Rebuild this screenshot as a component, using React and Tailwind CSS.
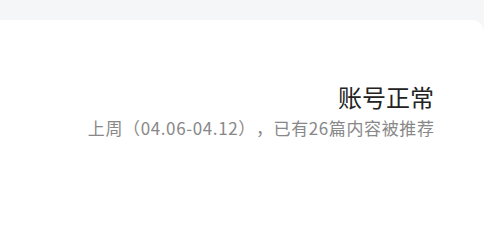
export default function App() {
  return (
    <div
      className="w-[484px] h-[235px] bg-[#f5f6f7] pt-5 overflow-hidden"
      style={{ fontFamily: '"Noto Sans CJK SC", "Noto Sans", sans-serif' }}
    >
      <div className="h-full bg-white rounded-tr-xl flex flex-col items-end pr-[50px] pt-[61px]">
        <h1 className="text-[24px] leading-[32px] text-[#222]">账号正常</h1>
        <p className="text-[17px] leading-[24px] text-[#888] mt-[3px] [text-spacing-trim:space-all] tracking-[0.62px] mr-[-0.6px]">
          上周（04.06-04.12），已有26篇内容被推荐
        </p>
      </div>
    </div>
  );
}
